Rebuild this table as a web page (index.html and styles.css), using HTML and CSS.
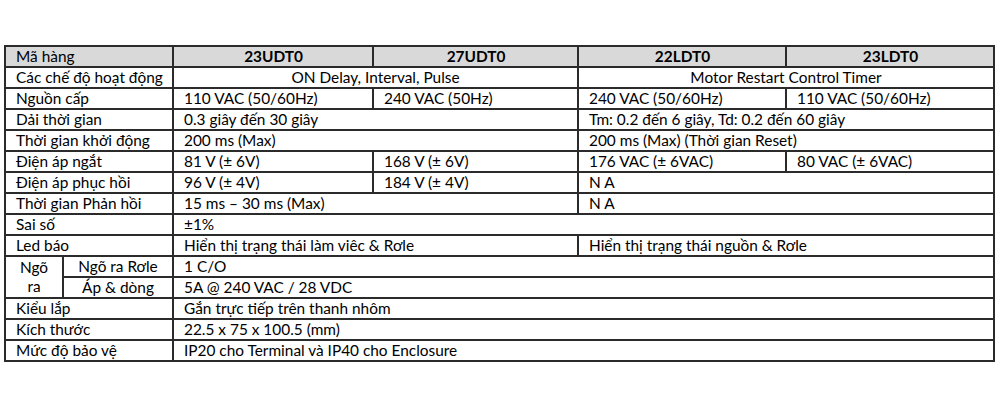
FILE: index.html
```html
<!DOCTYPE html>
<html lang="vi">
<head>
<meta charset="utf-8">
<link rel="stylesheet" href="styles.css">
</head>
<body>
<div class="page">
<table class="spec">
  <colgroup>
    <col class="c-a"><col class="c-b"><col class="c-2"><col class="c-3"><col class="c-4"><col class="c-5">
  </colgroup>
  <tr class="head">
    <td colspan="2">Mã hàng</td>
    <th>23UDT0</th><th>27UDT0</th><th>22LDT0</th><th>23LDT0</th>
  </tr>
  <tr><td colspan="2">Các chế độ hoạt động</td><td colspan="2" class="center">ON Delay, Interval, Pulse</td><td colspan="2" class="center">Motor Restart Control Timer</td></tr>
  <tr><td colspan="2">Nguồn cấp</td><td>110 VAC (50/60Hz)</td><td>240 VAC (50Hz)</td><td>240 VAC (50/60Hz)</td><td>110 VAC (50/60Hz)</td></tr>
  <tr><td colspan="2">Dải thời gian</td><td colspan="2">0.3 giây đến 30 giây</td><td colspan="2">Tm: 0.2 đến 6 giây, Td: 0.2 đến 60 giây</td></tr>
  <tr><td colspan="2">Thời gian khởi động</td><td colspan="2">200 ms (Max)</td><td colspan="2">200 ms (Max) (Thời gian Reset)</td></tr>
  <tr><td colspan="2">Điện áp ngắt</td><td>81 V (± 6V)</td><td>168 V (± 6V)</td><td>176 VAC (± 6VAC)</td><td>80 VAC (± 6VAC)</td></tr>
  <tr><td colspan="2">Điện áp phục hồi</td><td>96 V (± 4V)</td><td>184 V (± 4V)</td><td colspan="2">N A</td></tr>
  <tr><td colspan="2">Thời gian Phản hồi</td><td colspan="2">15 ms – 30 ms (Max)</td><td colspan="2">N A</td></tr>
  <tr><td colspan="2">Sai số</td><td colspan="4">±1%</td></tr>
  <tr><td colspan="2">Led báo</td><td colspan="2">Hiển thị trạng thái làm viêc &amp; Rơle</td><td colspan="2">Hiển thị trạng thái nguồn &amp; Rơle</td></tr>
  <tr><td rowspan="2" class="center">Ngõ<br>ra</td><td class="center">Ngõ ra Rơle</td><td colspan="4">1 C/O</td></tr>
  <tr><td class="center">Áp &amp; dòng</td><td colspan="4">5A @ 240 VAC / 28 VDC</td></tr>
  <tr><td colspan="2">Kiểu lắp</td><td colspan="4">Gắn trực tiếp trên thanh nhôm</td></tr>
  <tr><td colspan="2">Kích thước</td><td colspan="4">22.5 x 75 x 100.5 (mm)</td></tr>
  <tr><td colspan="2">Mức độ bảo vệ</td><td colspan="4">IP20 cho Terminal và IP40 cho Enclosure</td></tr>
</table>
</div>
</body>
</html>
```
FILE: styles.css
```css
html, body {
  margin: 0;
  padding: 0;
  background: #ffffff;
}
.page {
  padding: 45px 0 0 4px;
}
.spec {
  border-collapse: collapse;
  table-layout: fixed;
  width: 989px;
  font-family: Lato, "Open Sans", sans-serif;
  font-size: 15.4px;
  color: #000000;
}
.c-a { width: 58px; }
.c-b { width: 110px; }
.c-2 { width: 200px; }
.c-3 { width: 205px; }
.c-4 { width: 208px; }
.c-5 { width: 208px; }
.spec td, .spec th {
  border: 2px solid #2b2b2b;
  height: 21px;
  padding: 0 9px 0 10px;
  line-height: 19px;
  text-align: left;
  white-space: nowrap;
  overflow: hidden;
  box-sizing: border-box;
}
.spec th {
  font-weight: bold;
  text-align: center;
}
.head td, .head th {
  background: #d9d9d9;
}
.spec td.center {
  text-align: center;
  padding: 0 4px;
}
```
